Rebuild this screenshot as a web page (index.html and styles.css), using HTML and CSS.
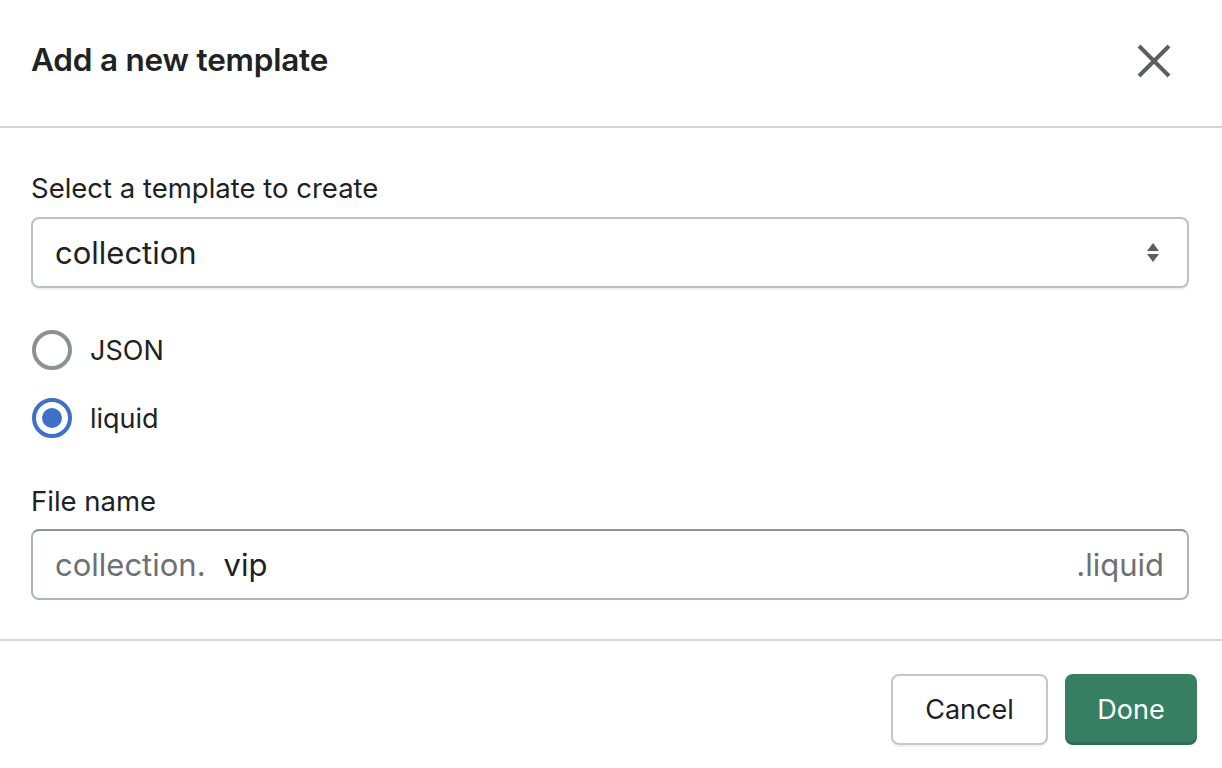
FILE: index.html
```html
<!DOCTYPE html>
<html lang="en">
<head>
<meta charset="utf-8">
<title>Add a new template</title>
<link rel="stylesheet" href="styles.css">
</head>
<body>
<div class="modal">
  <header class="modal-header">
    <h1 class="modal-title">Add a new template</h1>
    <button class="close-btn" aria-label="Close">
      <svg width="34" height="34" viewBox="0 0 34 34"><path d="M2 2 L32 32 M32 2 L2 32" stroke="#5c5f62" stroke-width="4" stroke-linecap="butt"/></svg>
    </button>
  </header>
  <section class="modal-body">
    <label class="field-label">Select a template to create</label>
    <div class="select">
      <span class="select-value">collection</span>
      <svg class="select-arrows" width="14" height="22" viewBox="0 0 14 22"><path d="M7 1 L13 9 L1 9 Z M1 12 L13 12 L7 20 Z" fill="#5c5f62"/></svg>
    </div>
    <div class="radio-group">
      <label class="radio-row">
        <span class="radio"></span>
        <span class="radio-text">JSON</span>
      </label>
      <label class="radio-row">
        <span class="radio checked"><span class="radio-dot"></span></span>
        <span class="radio-text">liquid</span>
      </label>
    </div>
    <label class="field-label">File name</label>
    <div class="textfield">
      <span class="prefix">collection.</span>
      <span class="value">vip</span>
      <span class="suffix">.liquid</span>
    </div>
  </section>
  <footer class="modal-footer">
    <button class="btn btn-secondary">Cancel</button>
    <button class="btn btn-primary">Done</button>
  </footer>
</div>
</body>
</html>
```

FILE: styles.css
```css
* { box-sizing: border-box; }
html, body { margin: 0; padding: 0; background: #ffffff; }
body {
  font-family: Inter, "Liberation Sans", sans-serif;
  color: #202223;
}
.modal { width: 1222px; height: 768px; }
.modal-header {
  height: 128px;
  border-bottom: 2px solid #d2d4d6;
  display: flex;
  align-items: center;
  justify-content: space-between;
  padding: 0 51px 8px 31px;
}
.modal-title {
  margin: 0;
  font-size: 31.5px;
  font-weight: 600;
  letter-spacing: -0.2px;
  color: #202223;
}
.close-btn {
  border: 0;
  background: none;
  padding: 0;
  width: 34px;
  height: 34px;
  display: flex;
  margin-top: 4px;
}
.modal-body {
  padding: 40px 33px 39px 31px;
  border-bottom: 2px solid #d2d4d6;
  display: flex;
  flex-direction: column;
}
.field-label {
  font-size: 27.5px;
  line-height: 40px;
  color: #202223;
}
.select {
  margin-top: 9px;
  height: 71px;
  border: 2px solid #bcc0c4;
  border-radius: 8px;
  box-shadow: 0 2px 1px rgba(0,0,0,0.06);
  display: flex;
  align-items: center;
  justify-content: space-between;
  padding: 0 27px 0 22px;
  font-size: 31px;
}
.select-arrows { display: block; }
.radio-group {
  display: flex;
  flex-direction: column;
  gap: 28px;
  margin: 42px 0 43px;
}
.radio-row {
  display: flex;
  align-items: center;
  height: 40px;
  gap: 18px;
  padding-left: 1px;
}
.radio {
  width: 40px;
  height: 40px;
  border-radius: 50%;
  border: 4px solid #8c9196;
  display: flex;
  align-items: center;
  justify-content: center;
}
.radio.checked { border-color: #3e6fc9; }
.radio-dot {
  width: 20px;
  height: 20px;
  border-radius: 50%;
  background: #3e6fc9;
}
.radio-text { font-size: 27px; }
.textfield {
  margin-top: 8px;
  height: 71px;
  border: 2px solid #aeb4b9;
  border-top-color: #8f9499;
  border-radius: 8px;
  display: flex;
  align-items: center;
  padding: 0 23px 0 22px;
  font-size: 31px;
}
.prefix { color: #6d7175; margin-right: 18px; }
.value { color: #202223; flex: 1; }
.suffix { color: #6d7175; }
.modal-footer {
  display: flex;
  justify-content: flex-end;
  gap: 17px;
  padding: 33px 25px 0 0;
}
.btn {
  height: 71px;
  border-radius: 8px;
  font-family: Inter, "Liberation Sans", sans-serif;
  font-size: 27px;
  padding: 0;
}
.btn-secondary {
  width: 157px;
  background: #ffffff;
  border: 2px solid #c4c7ca;
  color: #202223;
  box-shadow: 0 2px 1px rgba(0,0,0,0.05);
}
.btn-primary {
  width: 132px;
  background: #367f62;
  border: 0;
  color: #ffffff;
  box-shadow: inset 0 -3px 0 rgba(0,0,0,0.15);
}
```
